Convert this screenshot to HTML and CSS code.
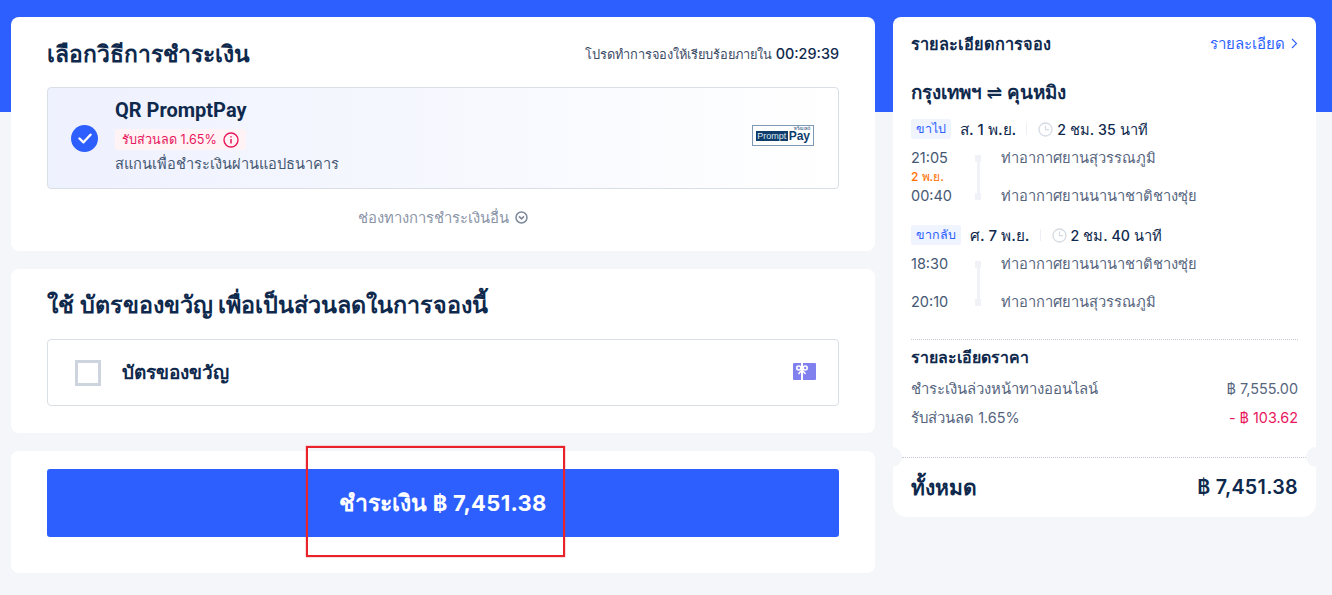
FILE: index.html
```html
<!DOCTYPE html>
<html lang="th">
<head>
  <meta charset="UTF-8" />
  <title>เลือกวิธีการชำระเงิน</title>
  <link rel="stylesheet" href="styles.css">
</head>
<body>
  <div class="page">
    <div class="main">

      <!-- Payment method -->
      <div class="card method-card">
        <div class="card-head">
          <h2 class="card-title">เลือกวิธีการชำระเงิน</h2>
          <div class="countdown">โปรดทำการจองให้เรียบร้อยภายใน <b>00:29:39</b></div>
        </div>
        <div class="method">
          <span class="radio">
            <svg width="14" height="11" viewBox="0 0 14 11"><path d="M1.500 5.500l4 3.800 7-7.600" fill="none" stroke="#fff" stroke-width="2.400" stroke-linecap="round" stroke-linejoin="round"/></svg>
          </span>
          <div class="method-info">
            <div class="method-name">QR PromptPay</div>
            <div class="discount"><span>รับส่วนลด 1.65%</span>
              <svg width="16" height="16" viewBox="0 0 16 16"><circle cx="8" cy="8" r="7" fill="none" stroke="#e8175d" stroke-width="1.400"/><path d="M8 7v4.600M8 4.200v1.400" stroke="#e8175d" stroke-width="1.500"/></svg>
            </div>
            <div class="method-desc">สแกนเพื่อชำระเงินผ่านแอปธนาคาร</div>
          </div>
          <div class="pp-logo">
            <span class="pp-thai">พร้อมเพย์</span>
            <div class="pp-row"><span class="pp-prompt">Prompt</span><span class="pp-pay">Pay</span></div>
          </div>
        </div>
        <div class="more">ช่องทางการชำระเงินอื่น
          <svg width="13" height="13" viewBox="0 0 13 13"><circle cx="6.500" cy="6.500" r="5.500" fill="none" stroke="#7f8a9c" stroke-width="1.500"/><path d="M4 5.300l2.500 2.500L9 5.300" fill="none" stroke="#7f8a9c" stroke-width="1.700"/></svg>
        </div>
      </div>

      <!-- Gift card -->
      <div class="card gift-card">
        <h2 class="card-title">ใช้ บัตรของขวัญ เพื่อเป็นส่วนลดในการจองนี้</h2>
        <div class="gift-row">
          <span class="checkbox"></span>
          <span class="gift-label">บัตรของขวัญ</span>
          <svg class="gift-icon" width="23" height="17" viewBox="0 0 23 17">
            <rect width="23" height="17" rx="1" fill="#8080ee"/>
            <rect x="8" width="2" height="17" fill="#fff"/>
            <g fill="none" stroke="#fff" stroke-width="1.600">
              <circle cx="5.800" cy="5" r="2"/>
              <circle cx="12.200" cy="5" r="2"/>
              <path d="M9 7l-3.500 4M9 7l3.500 4"/>
            </g>
          </svg>
        </div>
      </div>

      <!-- Pay -->
      <div class="card pay-card">
        <button class="pay-btn">ชำระเงิน <span class="num">฿ 7,451.38</span></button>
        <div class="annotation"></div>
      </div>
    </div>

    <div class="side">
      <div class="side-top">
        <div class="side-head">
          <span class="side-title">รายละเอียดการจอง</span>
          <span class="side-link">รายละเอียด
            <svg width="7" height="11" viewBox="0 0 7 11"><path d="M1 1l4.500 4.500L1 10" fill="none" stroke="#2d5fff" stroke-width="1.100"/></svg>
          </span>
        </div>
        <div class="route">กรุงเทพฯ ⇌ คุนหมิง</div>

        <div class="leg-head">
          <span class="tag">ขาไป</span>
          <span class="leg-date">ส. <span class="num">1</span> พ.ย.</span>
          <span class="sep"></span>
          <svg class="clock" width="15" height="15" viewBox="0 0 15 15"><circle cx="7.500" cy="7.500" r="6.500" fill="none" stroke="#d5dae3" stroke-width="1.300"/><path d="M7.500 3.500v4.200h3.500" fill="none" stroke="#d5dae3" stroke-width="1.200"/></svg>
          <span class="leg-time"><span class="num">2</span> ชม. <span class="num">35</span> นาที</span>
        </div>
        <div class="leg">
          <div class="times">
            <div>21:05</div>
            <div class="next-day">2 พ.ย.</div>
            <div>00:40</div>
          </div>
          <div class="line"></div>
          <div class="airports">
            <div>ท่าอากาศยานสุวรรณภูมิ</div>
            <div>ท่าอากาศยานนานาชาติชางซุ่ย</div>
          </div>
        </div>

        <div class="leg-head">
          <span class="tag">ขากลับ</span>
          <span class="leg-date">ศ. <span class="num">7</span> พ.ย.</span>
          <span class="sep"></span>
          <svg class="clock" width="15" height="15" viewBox="0 0 15 15"><circle cx="7.500" cy="7.500" r="6.500" fill="none" stroke="#d5dae3" stroke-width="1.300"/><path d="M7.500 3.500v4.200h3.500" fill="none" stroke="#d5dae3" stroke-width="1.200"/></svg>
          <span class="leg-time"><span class="num">2</span> ชม. <span class="num">40</span> นาที</span>
        </div>
        <div class="leg">
          <div class="times">
            <div>18:30</div>
            <div class="spacer"></div>
            <div>20:10</div>
          </div>
          <div class="line"></div>
          <div class="airports">
            <div>ท่าอากาศยานนานาชาติชางซุ่ย</div>
            <div>ท่าอากาศยานสุวรรณภูมิ</div>
          </div>
        </div>

        <div class="price">
          <div class="price-title">รายละเอียดราคา</div>
          <div class="price-row"><span>ชำระเงินล่วงหน้าทางออนไลน์</span><span class="num">฿ 7,555.00</span></div>
          <div class="price-row"><span>รับส่วนลด <span class="num">1.65%</span></span><span class="num minus">- ฿ 103.62</span></div>
        </div>
      </div>
      <div class="total">
        <span class="total-label">ทั้งหมด</span>
        <span class="total-value">฿ 7,451.38</span>
      </div>
    </div>
  </div>
</body>
</html>
```

FILE: styles.css
```css
body {
  margin: 0;
  font-family: "Inter", "Noto Sans", "DejaVu Sans", sans-serif;
  color: #0f294d;
  background: linear-gradient(#2d5fff 112px, #f5f6fa 112px);
  height: 595px;
  overflow: hidden;
}

.page {
  display: flex;
  gap: 18px;
  padding: 17px 16px 0 11px;
  align-items: flex-start;
}

.main {
  width: 864px;
  display: flex;
  flex-direction: column;
  gap: 18px;
}

.card {
  background: #fff;
  border-radius: 8px;
  padding: 0 36px;
}

.method-card {
  height: 234px;
  box-sizing: border-box;
  padding-top: 20px;
}

.card-head {
  display: flex;
  justify-content: space-between;
  align-items: center;
  height: 34px;
  margin-bottom: 16px;
}

.card-title {
  margin: 0;
  font-size: 22.800px;
  line-height: 34px;
  font-weight: 700;
}

.countdown {
  font-size: 12.800px;
  color: #3c4c66;
}

.countdown b {
  font-size: 14.400px;
  font-weight: 500;
  color: #0f294d;
}

.method {
  height: 102px;
  box-sizing: border-box;
  border: 1px solid #dadfe6;
  border-radius: 4px;
  background: linear-gradient(90deg, #eef1fe, #fff);
  display: flex;
  align-items: center;
  padding: 0 24px 0 23px;
}

.radio {
  width: 27px;
  height: 27px;
  border-radius: 50%;
  background: #2d5fff;
  display: flex;
  align-items: center;
  justify-content: center;
  margin-right: 17px;
}

.method-info {
  flex: 1;
  padding-bottom: 4px;
}

.method-name {
  font-family: "Roboto", sans-serif;
  font-size: 20px;
  line-height: 28px;
  font-weight: 700;
  margin-bottom: 5px;
}

.discount {
  display: flex;
  width: fit-content;
  align-items: center;
  gap: 6px;
  height: 21px;
  padding: 0 7px;
  border-radius: 3px;
  background: #fff3f5;
  color: #e8175d;
  font-size: 12.600px;
  margin-bottom: 2px;
}

.method-desc {
  font-size: 14.600px;
  line-height: 24px;
  color: #455873;
}

.pp-logo {
  width: 62px;
  height: 21px;
  box-sizing: border-box;
  border: 1px solid #7f9ab5;
  background: #fff;
  padding: 1px 3px 0;
  margin-bottom: 5px;
  font-family: "Liberation Sans", sans-serif;
}

.pp-thai {
  display: block;
  font-size: 4px;
  line-height: 4px;
  text-align: right;
  color: #0e3d6b;
}

.pp-row {
  display: flex;
  align-items: center;
  gap: 1px;
}

.pp-prompt {
  width: 33px;
  box-sizing: border-box;
  text-align: center;
  background: #0e3d6b;
  color: #dfe6ee;
  font-size: 9px;
  line-height: 10px;
}

.pp-pay {
  color: #0e3d6b;
  font-size: 12px;
  line-height: 10px;
  font-weight: 700;
}

.more {
  margin-top: 17px;
  text-align: center;
  font-size: 14.800px;
  line-height: 24px;
  color: #8a94a6;
}

.more svg {
  vertical-align: -1px;
  margin-left: 2px;
}

.gift-card {
  height: 164px;
  box-sizing: border-box;
  padding-top: 19px;
}

.gift-card .card-title {
  font-size: 23.300px;
}

.gift-row {
  margin-top: 17px;
  height: 67px;
  box-sizing: border-box;
  border: 1px solid #dadfe6;
  border-radius: 4px;
  display: flex;
  align-items: center;
  padding: 0 22px 2px 27px;
}

.checkbox {
  width: 26px;
  height: 26px;
  box-sizing: border-box;
  border: 3px solid #ced4de;
  margin: 2px 21px 0 0;
}

.gift-label {
  flex: 1;
  font-size: 19px;
  font-weight: 700;
}

.pay-card {
  height: 122px;
  box-sizing: border-box;
  padding-top: 18px;
  position: relative;
}

.pay-btn {
  display: block;
  width: 100%;
  height: 68px;
  border: 0;
  border-radius: 3px;
  background: #2d5fff;
  color: #fff;
  font-family: inherit;
  font-size: 23px;
  font-weight: 700;
}

.pay-btn .num {
  font-size: 22px;
  letter-spacing: .3px;
}

.annotation {
  position: absolute;
  left: 295px;
  top: -5px;
  width: 259px;
  height: 111px;
  box-sizing: border-box;
  border: 2px solid #e8232a;
  box-shadow: 0 0 1px #e8232a;
}

.side {
  width: 423px;
}

.side-top {
  position: relative;
  background: #fff;
  border-radius: 8px 8px 0 0;
  padding: 15px 18px 0;
  height: 440px;
  box-sizing: border-box;
}

/* ticket notches */
.side-top::before,
.side-top::after {
  content: "";
  position: absolute;
  bottom: -10px;
  width: 20px;
  height: 20px;
  border-radius: 50%;
  background: #f5f6fa;
  z-index: 1;
}

.side-top::before {
  left: -11px;
}

.side-top::after {
  right: -10px;
}

.side-head {
  display: flex;
  justify-content: space-between;
  align-items: center;
  height: 24px;
}

.side-title {
  font-size: 16.300px;
  font-weight: 700;
}

.side-link {
  font-size: 15px;
  color: #2d5fff;
}

.side-link svg {
  margin-left: 2px;
}

.route {
  margin-top: 24px;
  font-size: 18.800px;
  line-height: 26px;
  font-weight: 700;
}

.leg-head {
  display: flex;
  align-items: center;
  height: 24px;
  margin-top: 11px;
}

.leg + .leg-head {
  margin-top: 17px;
}

.tag {
  background: #f0f4ff;
  color: #2d5fff;
  font-size: 12.500px;
  line-height: 20px;
  padding: 0 5px;
  border-radius: 2px;
  margin-right: 9px;
}

.leg-date {
  font-size: 15.300px;
  font-weight: 500;
}

.leg-date .num {
  font-size: 15px;
}

.leg-time {
  font-size: 14.700px;
  font-weight: 500;
}

.leg-time .num {
  font-size: 14.200px;
}

.sep {
  width: 1px;
  height: 12px;
  background: #eef0f5;
  margin: 0 11px 0 10px;
}

.clock {
  margin-right: 4px;
}

.leg {
  display: flex;
  margin-top: 7px;
  font-size: 14.700px;
  color: #56657e;
}

.times {
  width: 64px;
  font-size: 14.500px;
  line-height: 20px;
  color: #455873;
}

.next-day {
  font-size: 12px;
  line-height: 18px;
  font-weight: 500;
  color: #ff6f00;
}

.spacer {
  height: 18px;
}

.line {
  position: relative;
  width: 6px;
  height: 45px;
  margin: 7px 20px 0 0;
  background: linear-gradient(#f0f2f7, #f0f2f7) center / 3px 100% no-repeat;
}

.line::before,
.line::after {
  content: "";
  position: absolute;
  left: 0;
  width: 6px;
  height: 7px;
  background: #f0f2f7;
}

.line::before {
  top: 0;
}

.line::after {
  bottom: 0;
}

.airports {
  display: flex;
  flex-direction: column;
  gap: 18px;
  line-height: 20px;
}

.price {
  margin-top: 27px;
  padding-top: 8px;
  border-top: 1px dotted #c4c9d2;
}

.price-title {
  font-size: 15.900px;
  font-weight: 700;
  line-height: 20px;
  margin-bottom: 11px;
}

.price-row {
  display: flex;
  justify-content: space-between;
  margin-bottom: 9px;
  font-size: 14.900px;
  line-height: 20px;
  color: #56657e;
}

.price-row .num {
  font-size: 14.400px;
}

.price-row .minus {
  color: #e8175d;
}

.total {
  position: relative;
  background: #fff;
  border-radius: 0 0 14px 14px;
  height: 60px;
  padding: 0 18px;
  display: flex;
  justify-content: space-between;
  align-items: center;
  font-weight: 700;
}

.total::before {
  content: "";
  position: absolute;
  top: 0;
  left: 9px;
  right: 10px;
  border-top: 1px dotted #c4c9d2;
}

.total-label {
  font-size: 21px;
}

.total-value {
  font-size: 19.700px;
  font-weight: 600;
  letter-spacing: .3px;
}
```
